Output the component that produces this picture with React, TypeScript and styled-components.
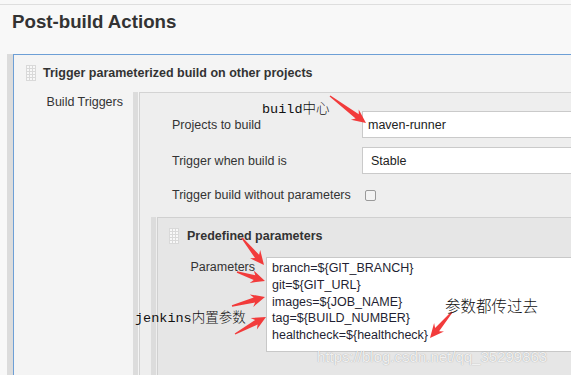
import React from "react";
import styled, { createGlobalStyle } from "styled-components";

const Global = createGlobalStyle`
  html, body { margin: 0; padding: 0; background: #f8f8f8; overflow: hidden; }
  body { font-family: "Liberation Sans", Arial, sans-serif; color: #333; }
`;

const Page = styled.div`
  position: relative;
  width: 571px;
  height: 375px;
  overflow: hidden;
  padding-top: 4px;
  box-sizing: border-box;
`;

const TopRule = styled.div`
  height: 1px;
  background: #dedede;
`;

const Title = styled.h1`
  margin: 5px 0 0 12px;
  font-size: 18.7px;
  line-height: 24px;
  font-weight: bold;
  color: #333;
`;

const Section = styled.section`
  margin: 20px 0 0 7px;
  width: 640px;
  border-left: 6px solid #dcdcdc;
`;

const SectionBox = styled.div`
  border-left: 1px solid #6d9fd6;
  border-top: 1px solid #6d9fd6;
  background: #f4f4f4;
`;

const SectionHeader = styled.div`
  display: flex;
  align-items: center;
  gap: 7px;
  height: 37px;
  padding: 0 0 2px 12px;
  box-sizing: border-box;
  font-weight: bold;
  font-size: 12.5px;
  color: #333;
`;

const SubHeader = styled(SectionHeader)`
  height: 36px;
  padding: 0 0 0 11px;
  gap: 8px;
`;

const Grip = styled.span`
  flex: none;
  width: 10px;
  height: 16px;
  background-color: #f8f8f8;
  background-image: linear-gradient(to right, #d9d9d9 1px, transparent 1px),
    linear-gradient(to bottom, #d9d9d9 1px, transparent 1px);
  background-size: 3px 3px;
`;

const SectionBody = styled.div`
  display: grid;
  grid-template-columns: 119px 1fr;
`;

const SideLabel = styled.div`
  text-align: right;
  padding: 3px 10px 0 0;
  font-size: 12.5px;
  line-height: 15px;
  color: #333;
`;

const Rail = styled.div`
  border-left: 5px solid #dcdcdc;
  padding-left: 1px;
`;

const Panel = styled.div`
  border-left: 1px solid #d3d3d3;
  border-top: 1px solid #d3d3d3;
  background: #eeeeee;
  padding-top: 18px;
`;

const FieldRow = styled.div<{ $h: number }>`
  display: grid;
  grid-template-columns: 190px 1fr;
  align-items: center;
  height: ${(p) => p.$h}px;
  padding-left: 32px;
  margin-bottom: 9px;
  font-size: 12.5px;
  color: #333;
`;

const TextBox = styled.div`
  height: 27px;
  width: 260px;
  box-sizing: border-box;
  border: 1px solid #cacaca;
  background: #fff;
  display: flex;
  align-items: center;
  padding-left: 5px;
  font-size: 12.5px;
  color: #222;
`;

const SelectBox = styled(TextBox)`
  padding-left: 8px;
`;

const CheckBox = styled.span`
  display: block;
  width: 11px;
  height: 11px;
  box-sizing: border-box;
  margin-left: 3px;
  border: 1px solid #9a9a9a;
  border-radius: 2px;
  background: #f3f3f3;
`;

const SubSection = styled.div`
  margin: 10px 0 0 11px;
  border-left: 5px solid #dcdcdc;
  padding-left: 1px;
`;

const SubBox = styled.div`
  border-left: 1px solid #d0d0d0;
  border-top: 1px solid #d0d0d0;
  background: #e6e6e6;
  padding-bottom: 60px;
`;

const ParamRow = styled.div`
  display: grid;
  grid-template-columns: 108px 1fr;
  margin-top: 3px;
`;

const ParamLabel = styled.div`
  text-align: right;
  padding: 3px 11px 0 0;
  font-size: 12.5px;
  line-height: 15px;
  color: #333;
`;

const ParamArea = styled.textarea`
  display: block;
  width: 320px;
  height: 95px;
  box-sizing: border-box;
  margin: 0;
  padding: 2px 5px;
  border: 1px solid #c8c8c8;
  border-radius: 0;
  background: #fff;
  font-family: "Liberation Sans", Arial, sans-serif;
  font-size: 12.5px;
  line-height: 16.75px;
  color: #1f1f33;
  resize: none;
  overflow: hidden;
  outline: none;
`;

const Overlay = styled.svg`
  position: absolute;
  left: 0;
  top: 0;
  pointer-events: none;
`;

const Note = styled.span<{ $x: number; $y: number; $size: number; $cjk?: boolean }>`
  position: absolute;
  left: ${(p) => p.$x}px;
  top: ${(p) => p.$y}px;
  font-family: ${(p) =>
    p.$cjk ? `"Noto Sans CJK SC", sans-serif` : `"Liberation Mono", "Noto Sans CJK SC", monospace`};
  font-size: ${(p) => p.$size}px;
  font-weight: 300;
  line-height: 1;
  color: #111;
  white-space: nowrap;
`;

const Watermark = styled.span`
  position: absolute;
  left: 317px;
  top: 348px;
  font-family: "Liberation Sans", Arial, sans-serif;
  font-size: 15px;
  line-height: 18px;
  color: rgba(255, 255, 255, 0.85);
  text-shadow: 0 0 1px rgba(0, 0, 0, 0.35);
  white-space: nowrap;
`;

type Pt = [number, number];

function arrowPoints(x1: number, y1: number, x2: number, y2: number): string {
  const dx = x2 - x1;
  const dy = y2 - y1;
  const L = Math.hypot(dx, dy);
  const ux = dx / L;
  const uy = dy / L;
  const nx = -uy;
  const ny = ux;
  const head = 11;
  const hw = 6.5;
  const neck = 2.6;
  const tail = 0.7;
  const cx = x2 - ux * head;
  const cy = y2 - uy * head;
  const bx = x2 - ux * (head + 3);
  const by = y2 - uy * (head + 3);
  const pts: Pt[] = [
    [x1 + nx * tail, y1 + ny * tail],
    [cx + nx * neck, cy + ny * neck],
    [bx + nx * hw, by + ny * hw],
    [x2, y2],
    [bx - nx * hw, by - ny * hw],
    [cx - nx * neck, cy - ny * neck],
    [x1 - nx * tail, y1 - ny * tail],
  ];
  return pts.map(([a, b]) => `${a.toFixed(1)},${b.toFixed(1)}`).join(" ");
}

const arrows: [number, number, number, number][] = [
  [330, 96, 366, 123],
  [242, 238, 264, 265],
  [237, 272, 265, 281],
  [232, 306, 265, 297],
  [235, 334, 266, 317],
  [452, 312, 430, 338],
];

const params = [
  "branch=${GIT_BRANCH}",
  "git=${GIT_URL}",
  "images=${JOB_NAME}",
  "tag=${BUILD_NUMBER}",
  "healthcheck=${healthcheck}",
].join("\n");

export default function App() {
  return (
    <Page>
      <Global />
      <TopRule />
      <Title>Post-build Actions</Title>
      <Section>
        <SectionBox>
          <SectionHeader>
            <Grip />
            Trigger parameterized build on other projects
          </SectionHeader>
          <SectionBody>
            <SideLabel>Build Triggers</SideLabel>
            <Rail>
              <Panel>
                <FieldRow $h={27}>
                  <span>Projects to build</span>
                  <TextBox>maven-runner</TextBox>
                </FieldRow>
                <FieldRow $h={27}>
                  <span>Trigger when build is</span>
                  <SelectBox>Stable</SelectBox>
                </FieldRow>
                <FieldRow $h={24}>
                  <span>Trigger build without parameters</span>
                  <CheckBox />
                </FieldRow>
                <SubSection>
                  <SubBox>
                    <SubHeader>
                      <Grip />
                      Predefined parameters
                    </SubHeader>
                    <ParamRow>
                      <ParamLabel>Parameters</ParamLabel>
                      <ParamArea readOnly value={params} />
                    </ParamRow>
                  </SubBox>
                </SubSection>
              </Panel>
            </Rail>
          </SectionBody>
        </SectionBox>
      </Section>

      <Watermark>https://blog.csdn.net/qq_35299863</Watermark>

      <Overlay width={571} height={375} viewBox="0 0 571 375">
        {arrows.map(([a, b, c, d], i) => (
          <polygon key={i} points={arrowPoints(a, b, c, d)} fill="#f23b3b" />
        ))}
      </Overlay>

      <Note $x={262} $y={103} $size={13.5}>build中心</Note>
      <Note $x={135} $y={312} $size={13.5}>jenkins内置参数</Note>
      <Note $x={445} $y={298} $size={15.5} $cjk>参数都传过去</Note>
    </Page>
  );
}
